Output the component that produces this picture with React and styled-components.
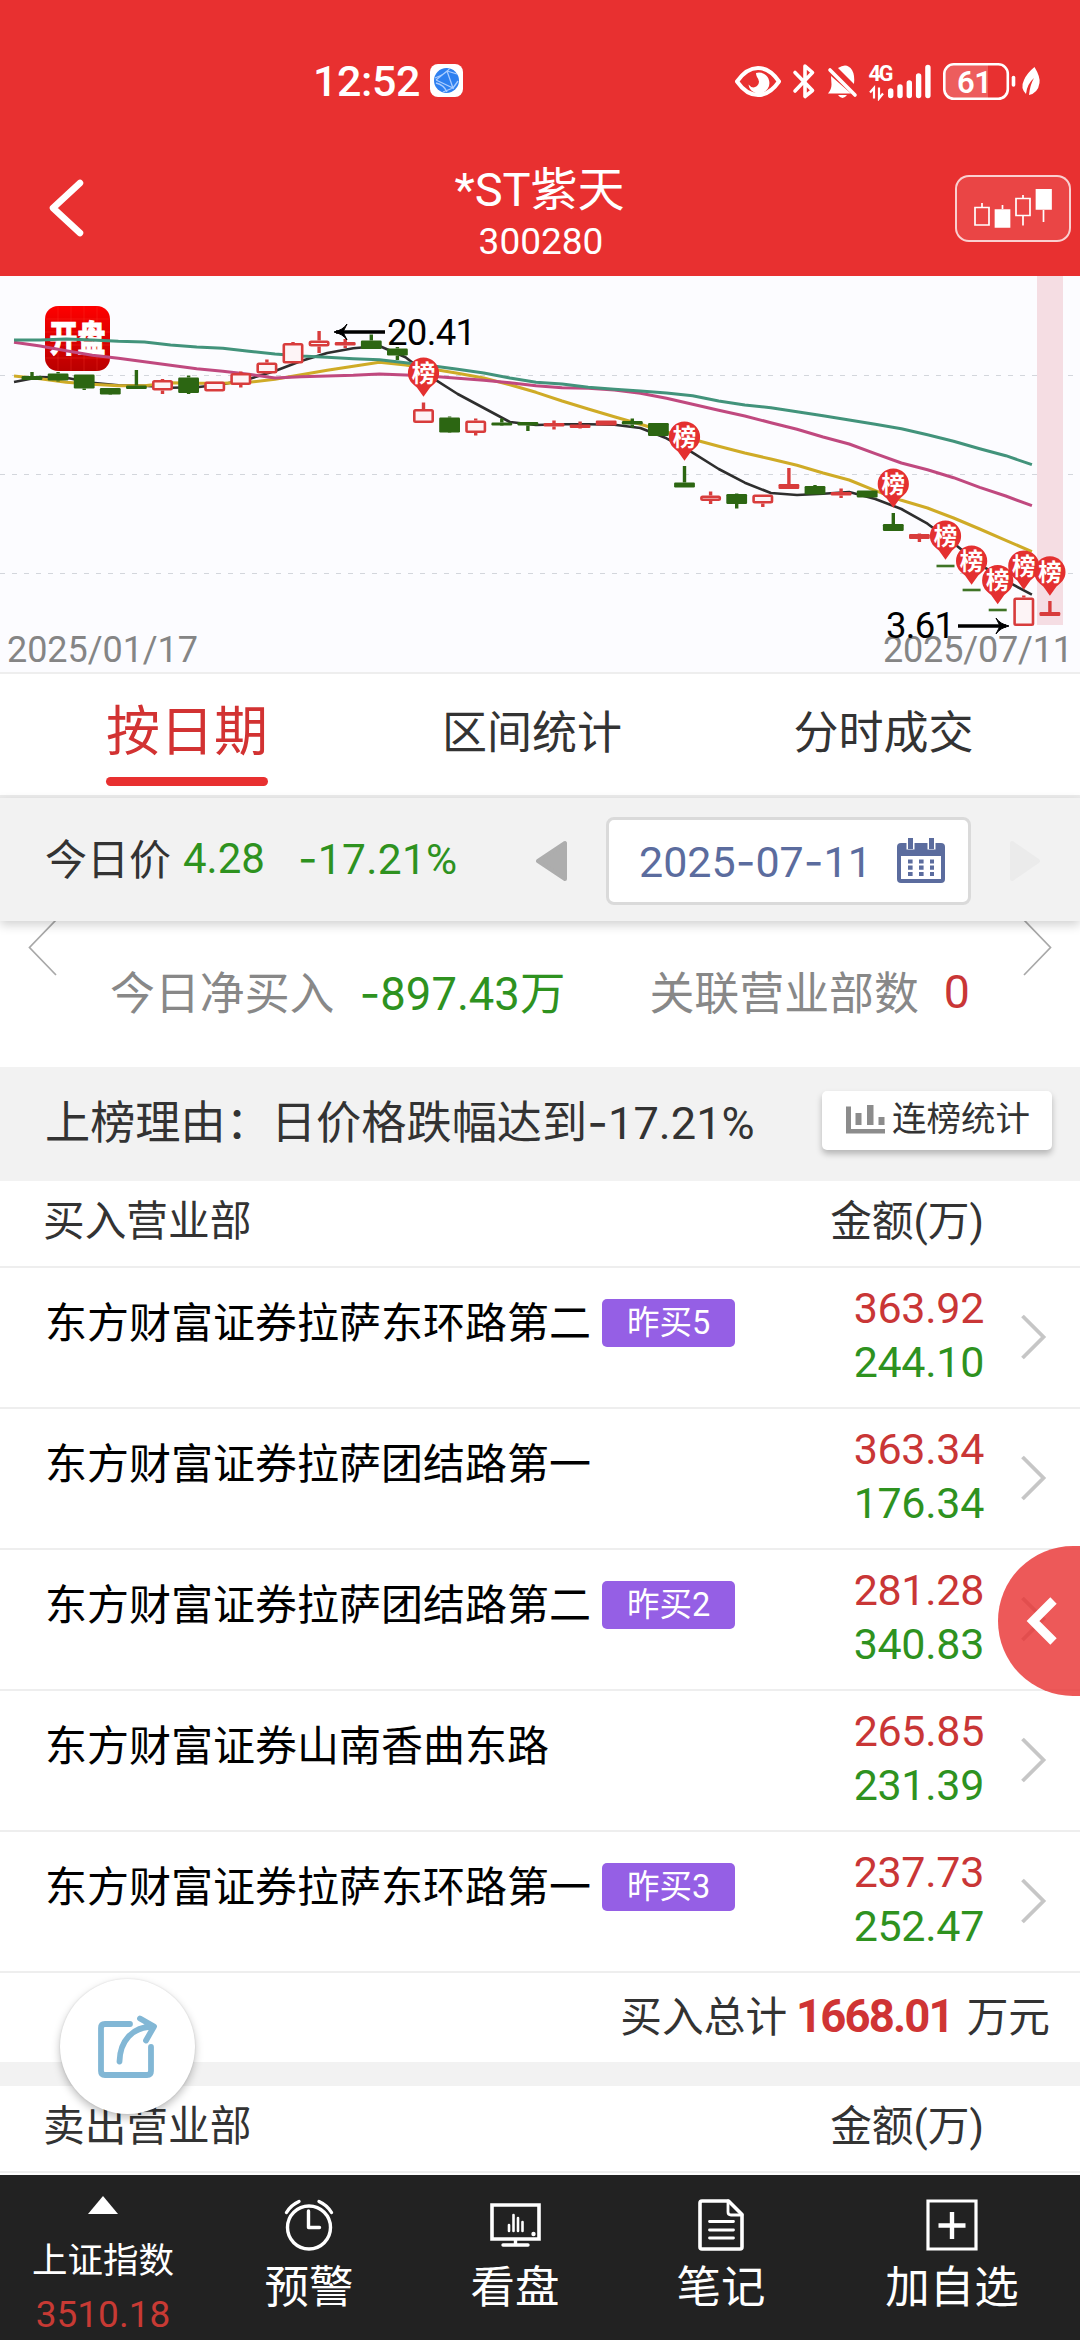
import React from 'react';
import styled, { createGlobalStyle } from 'styled-components';

const colors = {
    brand: '#e83030',
    red: '#c93636',
    green: '#2e921f',
    ink: '#333333',
    muted: '#888888',
    panel: '#f2f2f2',
    line: '#eeeeee',
    blue: '#5b6c9e',
};

const baseFonts = `
    font-family: Roboto, "Noto Sans CJK SC", sans-serif;
    font-weight: 400;
`;

// kind, body top, body bottom, wick top, wick bottom
const candles = [
    ['g', 100, 104, 96, 104],
    ['g', 97.5, 104.5, 96, 105.5],
    ['g', 98.5, 112.5, 98.5, 114],
    ['g', 112, 118.5, 112, 119],
    ['g', 109.5, 113, 94, 113],
    ['r', 104, 114.5, 103, 118],
    ['g', 101.5, 117, 99.5, 118],
    ['r', 105.5, 115.5, 105.5, 115.5],
    ['r', 97, 109, 95.5, 111.5],
    ['r', 86.5, 97.5, 83.5, 98],
    ['r', 67, 87.5, 66, 87.5],
    ['r', 64.5, 70.5, 55, 77],
    ['r', 66, 69.5, 63, 72],
    ['g', 64.5, 73, 58.5, 73],
    ['g', 72.5, 79.5, 71, 84],
    ['r', 133, 147, 126.5, 147],
    ['g', 141.5, 156.5, 140.5, 157],
    ['r', 144.5, 157, 142.5, 159.5],
    ['g', 146.5, 149.5, 142.5, 150],
    ['g', 146, 149.5, 146, 155],
    ['r', 147, 150.5, 144.5, 153.5],
    ['r', 148.5, 152, 145.5, 152.5],
    ['r', 144.5, 149.5, 144.5, 149.5],
    ['g', 145, 148.5, 142.5, 151.5],
    ['g', 147, 160, 147, 160],
    ['g', 206.5, 211.5, 190, 211.5],
    ['r', 219.5, 225, 215.5, 228],
    ['g', 218, 228, 217.5, 232.5],
    ['r', 218.5, 227.5, 218.5, 231],
    ['r', 208, 213, 192, 213],
    ['g', 210, 218.5, 209, 218.5],
    ['r', 216, 219.5, 212.5, 222],
    ['g', 214.5, 221.5, 214.5, 221.5],
    ['g', 248, 255, 237, 255],
    ['r', 258, 263, 257.5, 266],
    ['flat', 289.5, 290.5],
    ['flat', 313.5, 314.5],
    ['flat', 333.5, 334.5],
    ['r', 321.5, 350, 319.5, 350],
    ['r', 336, 340, 325, 340],
];

const averages = [
    {
        color: '#2e2e2e',
        width: 2.6,
        values: [106, 101, 101.7, 106.7, 109.3, 109.7, 111.7, 111.3, 108.3, 103, 95, 85, 77, 72.3, 70, 81.3, 101.3, 118, 132, 146, 149, 148.3, 148.3, 148.7, 152, 162.3, 176.7, 193, 206.7, 217, 219, 217.7, 216, 223, 233, 247.7, 267.3, 288.3, 304.7, 318.7],
    },
    {
        color: '#cfab27',
        width: 3,
        values: [100, 102.7, 106.3, 108.3, 109.7, 109.7, 106.7, 107.3, 107.3, 106.3, 103.3, 98.7, 94.3, 90.3, 86.3, 89, 93, 97.3, 102, 108.7, 116.3, 125, 133, 140.7, 148.3, 156, 163.3, 170.3, 177, 183, 189.3, 197, 204, 214.7, 224.3, 232, 242, 253, 264.3, 275.7],
    },
    {
        color: '#c0497f',
        width: 3,
        values: [66.3, 70, 74.7, 79.3, 82.3, 85.7, 89.3, 92.7, 95.3, 98.3, 102, 100.7, 100, 99.3, 98, 99, 100.3, 102.3, 104.3, 106.7, 109.7, 111.7, 112.3, 114, 117.3, 122.3, 128.3, 134.3, 140, 146.7, 153.3, 161, 168, 177.7, 187, 193.7, 201.7, 211.3, 220, 229.7],
    },
    {
        color: '#42937b',
        width: 3,
        values: [64, 64, 63, 64, 65.3, 66, 69, 71, 72.3, 75.3, 78, 80, 81.3, 82.7, 83.7, 86.7, 89.7, 93.3, 97, 102, 106.3, 108, 111.3, 113.3, 115, 117, 119.7, 125, 129, 131.7, 135.7, 139.7, 144, 148.3, 152.7, 158.7, 165.3, 172.7, 179.7, 188.7],
    },
];

// candle index, centre of the round head
const pins = [[15, 97], [25, 161], [33, 208], [35, 260], [36, 285], [37, 304.5], [38, 290], [39, 296]];

const buyers = [
    { name: '东方财富证券拉萨东环路第二', tag: '昨买5', buy: '363.92', sell: '244.10' },
    { name: '东方财富证券拉萨团结路第一', buy: '363.34', sell: '176.34' },
    { name: '东方财富证券拉萨团结路第二', tag: '昨买2', buy: '281.28', sell: '340.83' },
    { name: '东方财富证券山南香曲东路', buy: '265.85', sell: '231.39' },
    { name: '东方财富证券拉萨东环路第一', tag: '昨买3', buy: '237.73', sell: '252.47' },
];

const candleX = (i) => 32 + i * 26.1;

function Candle({ index, data }) {
    const [kind, top, bottom, wickTop, wickBottom] = data;
    const x = candleX(index);

    if (kind === 'flat') {
        return <rect x={x - 9} y={top - 0.8} width="18" height="2.6" fill="#3f7426" />;
    }

    const color = kind === 'g' ? '#2c6612' : '#d83c3c';
    const hollow = kind === 'r' && bottom - top > 5;
    const inset = hollow ? 1.2 : 0;

    return (
        <g>
            <path d={`M${x} ${wickTop}V${top}M${x} ${bottom}V${wickBottom}`} stroke={color} strokeWidth="3.4" />
            <rect
                x={x - 10.4 + inset}
                y={top + inset}
                width={20.8 - inset * 2}
                height={bottom - top - inset * 2}
                rx="1.2"
                fill={hollow ? '#fdf4f6' : color}
                stroke={hollow ? color : 'none'}
                strokeWidth="2.6"
            />
        </g>
    );
}

function Pin({ x, y }) {
    return (
        <g>
            <path d={`M${x - 15.6} ${y}a15.6 15.6 0 1 1 31.2 0c0 7 -4 10.5 -9 14.5l-6.6 9.3l-6.6 -9.3c-5 -4 -9 -7.5 -9 -14.5z`} fill="#e43030" />
            <text x={x} y={y + 8.5} textAnchor="middle" fontSize="23.5" fontWeight="700" fill="#fff">榜</text>
        </g>
    );
}

function PriceChart() {
    return (
        <ChartSvg viewBox="0 0 1080 396">
            {[99.5, 198.5, 297.5].map((y) => (
                <path key={y} d={`M0 ${y}H1074`} stroke="#d3d6dc" strokeWidth="1" strokeDasharray="5 7" />
            ))}
            <rect x="1037" y="0" width="26" height="349" fill="#f5dde3" />
            <rect x="45" y="30" width="65" height="65" rx="13" fill="url(#logoFill)" />
            <path d="M58 30v65M71 30v65M84 30v65M97 30v65M45 43h65M45 56h65M45 69h65M45 82h65" stroke="#ff3a2e" strokeOpacity="0.3" />
            <text
                transform="translate(77.5 75.5) scale(1 1.3)"
                textAnchor="middle"
                fontSize="28"
                fontWeight="900"
                fill="#fff"
                stroke="#fff"
                strokeWidth="0.6"
            >
                开盘
            </text>
            <defs>
                <linearGradient id="logoFill" x1="0" y1="0" x2="0" y2="1">
                    <stop offset="0" stopColor="#ff0000" />
                    <stop offset="1" stopColor="#b90000" />
                </linearGradient>
            </defs>
            {averages.map((line) => (
                <polyline
                    key={line.color}
                    points={line.values.map((y, i) => `${14 + i * 26.1},${y}`).join(' ')}
                    fill="none"
                    stroke={line.color}
                    strokeWidth={line.width}
                    strokeLinejoin="round"
                />
            ))}
            {candles.map((data, i) => <Candle key={i} index={i} data={data} />)}
            {pins.map(([i, y]) => <Pin key={i} x={candleX(i)} y={y} />)}
            <g fontSize="36" fill="#858585">
                <text x="7" y="386" textLength="191">2025/01/17</text>
                <text x="883" y="386" textLength="190">2025/07/11</text>
            </g>
            <path d="M385 56H336" stroke="#000" strokeWidth="3.4" />
            <path d="M347 48q-4 6 -13 8q9 2 13 8l-4 -8z" stroke="#000" strokeWidth="1" />
            <text x="387" y="68.5" fontSize="36.5" textLength="89">20.41</text>
            <path d="M958 350H1006" stroke="#000" strokeWidth="3.4" />
            <path d="M996 342q4 6 13 8q-9 2 -13 8l4 -8z" stroke="#000" strokeWidth="1" />
            <text x="886" y="362" fontSize="36.5" textLength="69">3.61</text>
        </ChartSvg>
    );
}

function StatusIcons() {
    return (
        <svg width="312" height="40" viewBox="732 60 312 40" fill="none">
            <path d="M737 80.500C744 70.500 751 67 758 67S772 70.500 779 80.500C772 90.500 765 94 758 94S744 90.500 737 80.500z" stroke="#fff" strokeWidth="4" strokeLinejoin="round" />
            <path d="M756 72a10.500 10.500 0 1 1 -7.500 11.500q4 5 8.500 1.500q4 -4 0 -9q-1 -2 -1 -4z" fill="#fff" />
            <path d="M795 71.500L812.500 89.500L805 95.500V65L812.500 71.500L795 90" stroke="#fff" strokeWidth="3.600" strokeLinecap="round" strokeLinejoin="round" />
            <path d="M831 75l20 17.500H828q3.500 -4 3.500 -9zM838 67q9 -6 14 2q3 5 2 14zM838 94h9q-4.500 6 -9 0z" fill="#fff" />
            <path d="M830 69L855 94" stroke="#fff" strokeWidth="3.600" strokeLinecap="round" />
            <text x="868.5" y="80" fontSize="21.5" fontWeight="700" fill="#fff" textLength="25">4G</text>
            <path d="M870 91.500l4 -4.500v10.500M879 86.500v11l4 -5" stroke="#fff" strokeWidth="2.200" />
            <path d="M890.700 90V94.500M900 86V94.500M909.300 82V94.500M918.600 75V94.500M927.900 66.500V94.500" stroke="#fff" strokeWidth="5.400" strokeLinecap="round" />
            <path d="M988 64h-34a9 9 0 0 0 -9 9v15a9 9 0 0 0 9 9h34z" fill="#fff" fillOpacity="0.22" />
            <rect x="944.3" y="63.3" width="63.5" height="34.5" rx="9.5" stroke="#fff" strokeWidth="2.6" />
            <text x="957" y="91.5" fontSize="31" fontWeight="600" fill="#fff" textLength="35">61</text>
            <path d="M1013.500 76.500v7.500" stroke="#fff" strokeWidth="3.600" strokeLinecap="round" />
            <path d="M1034.500 66q6 10 5 16q-1.500 10 -10.500 12q1 -10 5 -17q-7 6 -8 16q-6 -6 -2 -14q3 -7 10.500 -13z" fill="#fff" />
        </svg>
    );
}

function GlobeBadge() {
    return (
        <svg width="33" height="33" viewBox="0 0 33 33">
            <rect width="33" height="33" rx="8" fill="#fff" />
            <circle cx="16.5" cy="16.5" r="12.5" fill="#2e80f0" />
            <path d="M6 16L17 7L23 24L6 16M17 7L27 10M23 24L28 17M13 28L23 24M5 14Q16 10 20 4M6 19Q14 21 17 28" fill="none" stroke="#a9ccff" strokeWidth="1.3" />
        </svg>
    );
}

function CalendarIcon() {
    return (
        <svg width="48" height="46" viewBox="0 0 48 46">
            <path d="M4 5h40a4 4 0 0 1 4 4v32a4 4 0 0 1 -4 4h-40a4 4 0 0 1 -4 -4v-32a4 4 0 0 1 4 -4z" fill={colors.blue} />
            <path d="M4 18h40v23h-40z" fill="#fff" />
            <path d="M13.500 -1v12.500M34.500 -1v12.500" stroke="#fff" strokeWidth="8" />
            <path d="M13.500 0v11M34.500 0v11" stroke={colors.blue} strokeWidth="5" />
            <path d="M11 23.500h26M11 29.700h26M11 36h26" stroke={colors.blue} strokeWidth="4.2" strokeDasharray="4.6 6.4" />
        </svg>
    );
}

export default function App() {
    return (
        <Page>
            <GlobalStyle />
            <Header>
                <StatusBar>
                    <Clock>12:52</Clock>
                    <GlobeBadge />
                    <StatusRight><StatusIcons /></StatusRight>
                </StatusBar>
                <TitleBar>
                    <BackArrow width="44" height="64" viewBox="0 0 44 64">
                        <path d="M38 7L11 32L38 57" fill="none" stroke="#fff" strokeWidth="6.5" strokeLinecap="round" strokeLinejoin="round" />
                    </BackArrow>
                    <TitleBlock>
                        <StockName>*ST紫天</StockName>
                        <StockCode>300280</StockCode>
                    </TitleBlock>
                    <CandleButton>
                        <svg width="78" height="40" viewBox="0 0 78 40" fill="none" stroke="#fff" strokeWidth="1.7">
                            <path d="M1 18.500h14v17.500h-14zM8 18v-4M42 9.500h14v17h-14zM49 9v-3M49 27v9.500M28.500 20v-4M69.500 21v12" />
                            <path d="M21.500 21h14v17h-14zM62.500 0.800h14.500v19h-14.500z" fill="#fff" />
                        </svg>
                    </CandleButton>
                </TitleBar>
            </Header>

            <PriceChart />

            <Tabs>
                <Tab $active>按日期</Tab>
                <Tab>区间统计</Tab>
                <Tab>分时成交</Tab>
            </Tabs>

            <PriceBar>
                <PriceLabel>今日价</PriceLabel>
                <PriceValue>4.28</PriceValue>
                <PriceChange><Dash>-</Dash>17.21%</PriceChange>
                <ArrowButton>
                    <svg width="32" height="42" viewBox="0 0 32 42">
                        <path d="M2 21L29 3V39z" fill="#adadad" stroke="#adadad" strokeWidth="4" strokeLinejoin="round" />
                    </svg>
                </ArrowButton>
                <DateField>
                    <span>2025<Dash>-</Dash>07<Dash>-</Dash>11</span>
                    <CalendarIcon />
                </DateField>
                <ArrowButton $next>
                    <svg width="32" height="42" viewBox="0 0 32 42">
                        <path d="M29 21L3 3V39z" fill="#ebebeb" stroke="#ebebeb" strokeWidth="4" strokeLinejoin="round" />
                    </svg>
                </ArrowButton>
            </PriceBar>

            <Summary>
                <SlideArrow width="29" height="56" viewBox="0 0 29 56">
                    <path d="M28 -1L1.500 26.500L28 54" />
                </SlideArrow>
                <SummaryItems>
                    <span>今日净买入</span>
                    <NetBuy><Dash>-</Dash>897.43万</NetBuy>
                    <span>关联营业部数</span>
                    <LinkCount>0</LinkCount>
                </SummaryItems>
                <SlideArrow width="29" height="56" viewBox="0 0 29 56">
                    <path d="M1 -1L27.500 26.500L1 54" />
                </SlideArrow>
            </Summary>

            <ReasonBar>
                <Reason>上榜理由：日价格跌幅达到<Dash>-</Dash>17.21%</Reason>
                <StatsButton>
                    <svg width="39" height="29" viewBox="0 0 39 29" fill="#8c8c8c">
                        <path d="M0 1.500h5v22.500h34v4.500h-39zM9.500 8h6v12h-6zM21 0h6.500v20h-6.500zM32.500 12h6v8h-6z" />
                    </svg>
                    <StatsLabel>连榜统计</StatsLabel>
                </StatsButton>
            </ReasonBar>

            <ListHead>
                <span>买入营业部</span>
                <span>金额(万)</span>
            </ListHead>
            {buyers.map((item) => (
                <BrokerRow key={item.name}>
                    <Broker>
                        <BrokerName>{item.name}</BrokerName>
                        {item.tag && <Tag>{item.tag}</Tag>}
                    </Broker>
                    <Amounts>
                        <Amount $color={colors.red}>{item.buy}</Amount>
                        <Amount $color={colors.green}>{item.sell}</Amount>
                    </Amounts>
                    <RowArrow width="28" height="46" viewBox="0 0 28 46">
                        <path d="M2.500 2L23.500 23L2.500 44" fill="none" stroke="#c6c6c6" strokeWidth="3.8" />
                    </RowArrow>
                </BrokerRow>
            ))}
            <TotalRow>
                买入总计<TotalValue>1668.01</TotalValue>万元
            </TotalRow>
            <Divider />
            <ListHead>
                <span>卖出营业部</span>
                <span>金额(万)</span>
            </ListHead>

            <Spacer />

            <BottomNav>
                <IndexItem>
                    <svg width="30" height="18" viewBox="0 0 30 18"><path d="M15 0L30 18H0z" fill="#fff" /></svg>
                    <IndexName>上证指数</IndexName>
                    <IndexValue>3510.18</IndexValue>
                </IndexItem>
                <NavItem>
                    <svg width="50" height="52" viewBox="0 0 50 52" fill="none" stroke="#fff" strokeWidth="3.4" strokeLinecap="round" strokeLinejoin="round">
                        <circle cx="25" cy="28.5" r="21.5" />
                        <path d="M24.500 12v16.500h11M2.500 13.500Q7 6 15 2.500M47.500 13.500Q43 6 35 2.500" />
                    </svg>
                    预警
                </NavItem>
                <NavItem>
                    <svg width="51" height="52" viewBox="0 0 51 52" fill="none" stroke="#fff" strokeLinecap="round">
                        <path d="M2 6h47v34h-47z" strokeWidth="3.6" />
                        <path d="M13 46h25M25.500 41v5" strokeWidth="3.4" />
                        <path d="M19 26v6M23.500 16v16M28 19v13M32.500 23v9" strokeWidth="2.6" />
                        <circle cx="43.5" cy="35" r="2.2" fill="#fff" stroke="none" />
                    </svg>
                    看盘
                </NavItem>
                <NavItem>
                    <svg width="46" height="52" viewBox="0 0 46 52" fill="none" stroke="#fff" strokeLinecap="round" strokeLinejoin="round">
                        <path d="M4 2h26.500L44 15.500V48q0 2 -2 2H4q-2 0 -2 -2V4q0 -2 2 -2z" strokeWidth="3.6" />
                        <path d="M30 2v11q0 3 3 3h11M11.500 22.500h24M11.500 31h24M11.500 39h24" strokeWidth="2.8" />
                    </svg>
                    笔记
                </NavItem>
                <NavItem>
                    <svg width="52" height="52" viewBox="0 0 52 52" fill="none" stroke="#fff" strokeWidth="3.2">
                        <path d="M2 2h48v48h-48z" />
                        <path d="M26 13v27M12.500 26.500h27" strokeWidth="4.4" />
                    </svg>
                    加自选
                </NavItem>
            </BottomNav>

            <SideHandle>
                <svg width="34" height="50" viewBox="0 0 34 50">
                    <path d="M28.500 4.500L8 25L28.500 45.500" fill="none" stroke="#fff" strokeWidth="9" />
                </svg>
            </SideHandle>
            <ShareButton>
                <svg width="60" height="64" viewBox="0 0 60 64" fill="none" stroke="#82b7d5" strokeWidth="5.8" strokeLinecap="round" strokeLinejoin="round">
                    <path d="M32 9H7q-4 0 -4 4V56q0 4 4 4H49q4 0 4 -4V32" />
                    <path d="M21.500 46.500C22 26 34 12 55 11.500M42 3.500L56 11.500L48 25.500" />
                </svg>
            </ShareButton>
        </Page>
    )
}

const GlobalStyle = createGlobalStyle`
    * {
        box-sizing: border-box;
    }

    body {
        margin: 0;
        background: #fff;
    }

    button {
        ${baseFonts}
        border: none;
        padding: 0;
    }

    svg {
        display: block;
        flex-shrink: 0;
    }
`;

const Page = styled.div`
    position: relative;
    display: flex;
    flex-direction: column;
    width: 1080px;
    height: 2340px;
    overflow: hidden;

    ${baseFonts}
    color: ${colors.ink};
    background: #fff;
    white-space: nowrap;
`;

const Header = styled.header`
    height: 276px;
    flex-shrink: 0;
    color: #fff;
    background: ${colors.brand};
`;

const StatusBar = styled.div`
    display: flex;
    align-items: center;
    height: 161px;
    padding: 0 36px 0 313px;
`;

const Clock = styled.span`
    width: 117px;
    font-size: 43px;
    font-weight: 500;
    letter-spacing: -0.4px;
`;

const StatusRight = styled.div`
    margin-left: auto;
`;

const TitleBar = styled.div`
    display: flex;
    align-items: flex-start;
    justify-content: space-between;
    padding: 0 9px 0 42px;
`;

const BackArrow = styled.svg`
    margin-top: 15px;
`;

const TitleBlock = styled.div`
    display: flex;
    flex-direction: column;
    align-items: center;
    margin-left: 41px;
    padding-top: 2px;
`;

const StockName = styled.h1`
    margin: 0 3px 0 0;
    font-size: 47px;
    font-weight: 400;
    line-height: 54px;
`;

const StockCode = styled.span`
    font-size: 37px;
    line-height: 49px;
`;

const CandleButton = styled.button`
    display: flex;
    justify-content: center;
    width: 116px;
    height: 67px;
    margin-top: 14px;
    padding-top: 12px;

    border: 2px solid rgba(255, 255, 255, 0.75);
    border-radius: 14px;
    background: rgba(255, 255, 255, 0.1);
`;

const ChartSvg = styled.svg`
    width: 1080px;
    height: 396px;
    background: #fcfcff;
    font-family: Roboto, "Noto Sans CJK SC", sans-serif;
`;

const Tabs = styled.nav`
    display: grid;
    grid-template-columns: 348px 342px 361px;
    justify-items: center;
    height: 126px;
    flex-shrink: 0;
    padding-left: 13px;
    border-top: 2px solid ${colors.line};
    border-bottom: 3px solid #ececec;
`;

const Tab = styled.span`
    height: 112px;
    padding-top: 14px;
    line-height: ${({ $active }) => ($active ? '90px' : '92px')};
    font-size: ${({ $active }) => ($active ? '54px' : '45px')};
    color: ${({ $active }) => ($active ? '#d23232' : colors.ink)};

    &::after {
        content: '';
        display: ${({ $active }) => ($active ? 'block' : 'none')};
        height: 9px;
        margin-top: -1px;
        border-radius: 5px;
        background: ${colors.brand};
    }
`;

const PriceBar = styled.section`
    display: flex;
    align-items: center;
    height: 123px;
    flex-shrink: 0;
    padding: 3px 39px 0 45px;
    z-index: 1;

    font-size: 42px;
    background: ${colors.panel};
    box-shadow: 0 4px 10px rgba(0, 0, 0, 0.18);
`;

const PriceLabel = styled.span`
    width: 138px;
    margin-top: -10px;
    font-size: 42px;
`;

const PriceValue = styled.span`
    width: 115px;
    margin-top: -5px;
    color: ${colors.green};
`;

const PriceChange = styled(PriceValue)`
    width: 238px;
    font-size: 42.5px;
    letter-spacing: 0.3px;
`;

const Dash = styled.span`
    font-family: Inter, sans-serif;
`;

const ArrowButton = styled.button`
    display: flex;
    background: transparent;
    margin-left: ${({ $next }) => ($next ? 'auto' : 0)};
`;

const DateField = styled.div`
    display: flex;
    align-items: center;
    justify-content: space-between;
    width: 365px;
    height: 88px;
    margin-left: 38px;
    padding: 0 23px 0 30px;

    border: 3px solid #dadada;
    border-radius: 8px;
    background: #fff;
    color: ${colors.blue};
    font-size: 43px;
`;

const Summary = styled.section`
    display: flex;
    justify-content: space-between;
    height: 146px;
    flex-shrink: 0;
    padding: 0 28px;
`;

const SlideArrow = styled.svg`
    fill: none;
    stroke: #a8a8a8;
    stroke-width: 1.7;
`;

const SummaryItems = styled.div`
    display: flex;
    align-items: center;
    flex: 1;
    padding: 0 0 8px 53px;
    font-size: 44.9px;
    color: ${colors.muted};
`;

const NetBuy = styled.span`
    width: 290px;
    margin-left: 25px;
    font-size: 45.4px;
    color: ${colors.green};
`;

const LinkCount = styled.span`
    margin: 4px 0 0 25px;
    font-size: 46.5px;
    color: ${colors.red};
`;

const ReasonBar = styled.section`
    display: flex;
    align-items: center;
    justify-content: space-between;
    height: 114px;
    flex-shrink: 0;
    padding: 0 28px 0 45px;
    font-size: 45.2px;
    background: ${colors.panel};
`;

const Reason = styled.span`
    margin-top: -9px;
`;

const StatsButton = styled.button`
    display: flex;
    align-items: center;
    gap: 7px;
    width: 230px;
    height: 59px;
    padding: 0 0 2px 24px;
    margin-bottom: 7px;

    border-radius: 5px;
    background: #fff;
    box-shadow: 0 4px 6px rgba(0, 0, 0, 0.25);
    color: ${colors.ink};
    font-size: 34.5px;
`;

const StatsLabel = styled.span`
    margin-top: -7px;
`;

const ListHead = styled.div`
    display: flex;
    justify-content: space-between;
    height: 87px;
    flex-shrink: 0;
    padding: 0 96px 0 43px;
    border-bottom: 2px solid ${colors.line};
    font-size: 41.7px;
    line-height: 81px;
`;

const BrokerRow = styled.article`
    display: flex;
    height: 141px;
    flex-shrink: 0;
    padding-left: 45px;
    border-bottom: 2px solid ${colors.line};
`;

const Broker = styled.div`
    display: flex;
    align-items: center;
    gap: 11px;
    flex: 1;
    height: 110px;
`;

const BrokerName = styled.span`
    margin-top: -7px;
    font-size: 42px;
    color: #000;
`;

const Tag = styled.span`
    width: 133px;
    height: 48px;
    border-radius: 5px;
    background: #955fe5;
    color: #fff;
    font-size: 32.5px;
    line-height: 48px;
    text-align: center;
`;

const Amounts = styled.div`
    display: flex;
    flex-direction: column;
    padding-top: 13px;
    text-align: right;
`;

const Amount = styled.span`
    font-size: 43px;
    line-height: 54px;
    letter-spacing: -0.3px;
    color: ${({ $color }) => $color};
`;

const RowArrow = styled.svg`
    margin: 46px 32px 0 36px;
`;

const TotalRow = styled.div`
    display: flex;
    align-items: center;
    justify-content: flex-end;
    height: 89px;
    flex-shrink: 0;
    padding: 0 30px 7px 0;
    font-size: 41.7px;
`;

const TotalValue = styled.strong`
    margin: 4px 14px 0 9px;
    font-size: 45.5px;
    font-weight: 700;
    letter-spacing: -1.9px;
    color: #cf3434;
`;

const Divider = styled.div`
    height: 24px;
    flex-shrink: 0;
    background: ${colors.panel};
`;

const Spacer = styled.div`
    flex: 1;
`;

const BottomNav = styled.nav`
    display: grid;
    grid-template-columns: repeat(4, 206px) 256px;
    height: 165px;
    flex-shrink: 0;
    background: #222222;
    color: #fff;
`;

const NavItem = styled.div`
    display: flex;
    flex-direction: column;
    align-items: center;
    padding-top: 24px;
    font-size: 44.5px;
    line-height: 74px;
`;

const IndexItem = styled.div`
    display: flex;
    flex-direction: column;
    align-items: center;
    padding-top: 21px;
`;

const IndexName = styled.span`
    margin-top: 20px;
    font-size: 35.5px;
    line-height: 54px;
`;

const IndexValue = styled.span`
    font-size: 37px;
    line-height: 54px;
    color: #c83a34;
`;

const SideHandle = styled.button`
    position: absolute;
    top: 1546px;
    right: 0;
    display: flex;
    align-items: center;
    width: 82px;
    height: 150px;
    padding-left: 27px;

    border-radius: 75px 0 0 75px;
    background: rgba(232, 48, 48, 0.8);
`;

const ShareButton = styled.button`
    position: absolute;
    top: 1979px;
    left: 60px;
    display: flex;
    align-items: center;
    justify-content: center;
    width: 135px;
    height: 135px;

    border-radius: 50%;
    background: #fff;
    box-shadow: 0 4px 8px rgba(0, 0, 0, 0.25), 0 0 2px rgba(0, 0, 0, 0.12);
`;
